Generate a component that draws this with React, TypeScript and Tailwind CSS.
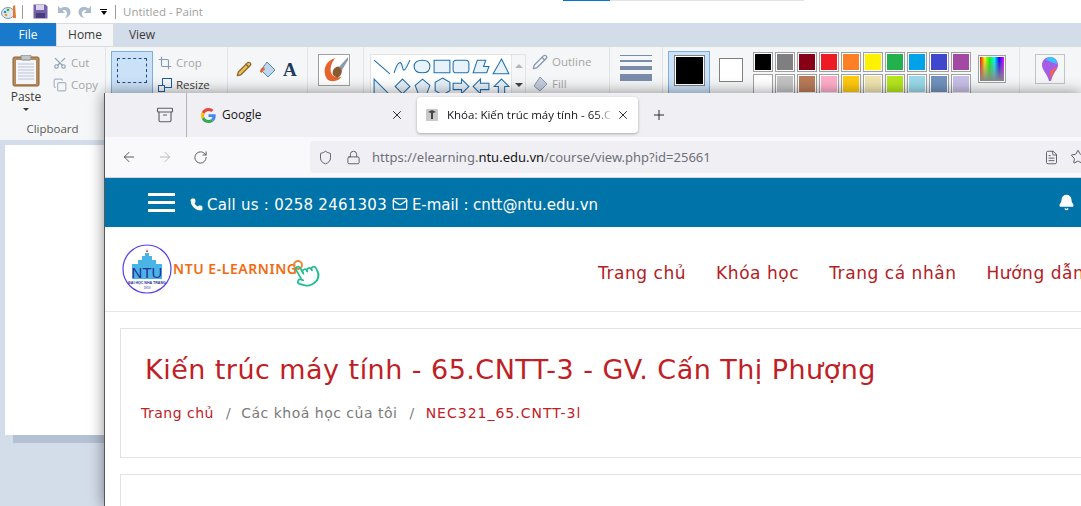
import { ArrowLeft, ArrowRight, Bell, Lock, Mail, Phone, Plus, RotateCw, Shield, Star, X, Pointer, Crop, Scissors, Copy, Pencil, FileText, Archive } from 'lucide-react';

const swatchesTop = ['#000000', '#7f7f7f', '#880015', '#ed1c24', '#ff7f27', '#fff200', '#22b14c', '#00a2e8', '#3f48cc', '#a349a4'];
const swatchesBottom = ['#ffffff', '#c3c3c3', '#b97a57', '#ffaec9', '#ffc90e', '#efe4b0', '#b5e61d', '#99d9ea', '#7092be', '#c8bfe7'];
const navItems = ['Trang chủ', 'Khóa học', 'Trang cá nhân', 'Hướng dẫn'];

const shapePaths = [
  'M2 3 L17 16',
  'M2 15 C6 2 9 4 10 10 C11 16 14 10 17 3',
  'M10 3 C4 3 2 6 2 9 C2 13 5 15 10 15 C15 15 17 12 17 9 C17 6 15 3 10 3 Z',
  'M2 3 H17 V15 H2 Z',
  'M5 3 H14 Q17 3 17 6 V12 Q17 15 14 15 H5 Q2 15 2 12 V6 Q2 3 5 3 Z',
  'M6 3 H14 L12 9 H17 L15 15 H2 Z',
  'M10 2 L17 16 H2 Z',
  'M2 2 L17 17 H2 Z',
  'M10 2 L17 9 L10 16 L3 9 Z',
  'M10 2 L17 8 L14 16 H6 L3 8 Z',
  'M10 1 L17 5 V13 L10 17 L3 13 V5 Z',
  'M2 6 H10 V2 L17 9 L10 16 V12 H2 Z',
  'M17 6 H9 V2 L2 9 L9 16 V12 H17 Z',
  'M10 2 L17 9 H13 V17 H7 V9 H3 Z',
];

function PaintTitleBar() {
  return (
    <div className="h-[23px] flex items-center bg-white text-[11.5px] text-[#a0a0a0]">
      <svg width="16" height="16" viewBox="0 0 16 16" className="ml-[1px]">
        <ellipse cx="7" cy="9" rx="6.5" ry="5.5" fill="#dfe8ef" stroke="#7a9ab5" />
        <circle cx="4" cy="8" r="1.3" fill="#2f8fd6" />
        <circle cx="7" cy="6" r="1.3" fill="#3aa655" />
        <circle cx="5" cy="11" r="1.3" fill="#e2a21b" />
        <path d="M12 2 L14 1 L15 14 L12 14 Z" fill="#e8762c" />
      </svg>
      <div className="w-px h-[14px] bg-[#9a9a9a] ml-[5px]" />
      <svg width="15" height="15" viewBox="0 0 15 15" className="ml-[10px]">
        <path d="M0.5 0.5 H12.5 L14.5 2.5 V14.5 H0.5 Z" fill="#7463a8" />
        <rect x="3" y="1" width="8" height="5" fill="#d9d4ea" />
        <rect x="3" y="9" width="9" height="5" fill="#4a3d7c" />
      </svg>
      <svg width="14" height="14" viewBox="0 0 14 14" className="ml-[9px]">
        <path d="M1 1 V8 H8 L5.5 5.5 C8 4 10.5 6 10 9 C9.8 10.5 9 12 8 13 C11 12.5 13.5 10 13.5 7 C13.5 2.5 8 0.5 3.5 3.5 Z" fill="#a9bbcd" />
      </svg>
      <svg width="14" height="14" viewBox="0 0 14 14" className="ml-[7px]">
        <path d="M13 1 V8 H6 L8.5 5.5 C6 4 3.5 6 4 9 C4.2 10.5 5 12 6 13 C3 12.5 0.5 10 0.5 7 C0.5 2.5 6 0.5 10.5 3.5 Z" fill="#a9bbcd" />
      </svg>
      <div className="ml-[8px] flex flex-col items-center gap-[1px]">
        <div className="w-[7px] h-px bg-black" />
        <div className="w-0 h-0 border-x-[3.5px] border-x-transparent border-t-[4px] border-t-black" />
      </div>
      <div className="w-px h-[14px] bg-[#9a9a9a] ml-[8px]" />
      <span className="ml-[7px]">Untitled - Paint</span>
    </div>
  );
}

function PaintTabs() {
  return (
    <div className="h-[23px] flex text-[12px] text-[#3b3b3b]">
      <div className="w-[56px] bg-[#1979ca] text-white flex items-center justify-center">File</div>
      <div className="w-[58px] bg-[#f5f6f7] border-x border-t border-[#dadbdc] flex items-center justify-center">Home</div>
      <div className="w-[56px] flex items-center justify-center">View</div>
    </div>
  );
}

function RibbonLabelled({ icon, label, dim }: { icon: React.ReactNode; label: string; dim?: boolean }) {
  return (
    <div className={`h-[22px] flex items-center gap-[4px] text-[11.5px] ${dim ? 'text-[#a6a6a6]' : 'text-[#3b3b3b]'}`}>
      {icon}
      <span>{label}</span>
    </div>
  );
}

function PaintRibbon() {
  return (
    <div className="h-[94px] flex bg-[#f5f6f7] border-t border-[#dadbdc] text-[12px] text-[#3b3b3b] overflow-hidden">
      {/* clipboard */}
      <div className="w-[106px] shrink-0 border-r border-[#e2e3e4] flex flex-col">
        <div className="flex h-[74px]">
          <div className="w-[52px] flex flex-col items-center pt-[8px]">
            <svg width="28" height="32" viewBox="0 0 28 32">
              <rect x="1" y="2" width="26" height="29" rx="1.5" fill="#b58a5e" stroke="#8c6239" />
              <rect x="4" y="5" width="20" height="24" fill="#f4f5f8" />
              <path d="M6 9 H22 M6 12 H22 M6 15 H22 M6 18 H22 M6 21 H22 M6 24 H22" stroke="#b8c4d6" />
              <rect x="9" y="0" width="10" height="5" rx="1" fill="#c5c5c5" stroke="#8a8a8a" />
            </svg>
            <span className="mt-[2px] leading-[16px]">Paste</span>
            <div className="mt-[3px] w-0 h-0 border-x-[3px] border-x-transparent border-t-[3px] border-t-[#3b3b3b]" />
          </div>
          <div className="pt-[5px] pl-[1px]">
            <RibbonLabelled dim icon={<Scissors size={14} className="text-[#8fa1b5] -rotate-90" />} label="Cut" />
            <RibbonLabelled dim icon={<Copy size={14} className="text-[#a9b6c6]" />} label="Copy" />
          </div>
        </div>
        <div className="text-center text-[11.5px] text-[#5b5b5b] leading-[16px]">Clipboard</div>
      </div>
      {/* image */}
      <div className="w-[122px] shrink-0 border-r border-[#e2e3e4] flex pt-[4px] pl-[5px] gap-[5px]">
        <div className="w-[42px] h-[70px] border border-[#7eaee0] bg-[#cbe1f7] flex flex-col items-center pt-[6px]">
          <div className="w-[30px] h-[25px] border border-dashed border-[#1f4e8c]" />
          <span className="mt-[10px]">Select</span>
        </div>
        <div className="pt-[1px]">
          <RibbonLabelled dim icon={<Crop size={14} className="text-[#8a98b8]" />} label="Crop" />
          <RibbonLabelled icon={
            <svg width="14" height="14" viewBox="0 0 14 14" fill="none" stroke="#1d5fa8">
              <rect x="4.5" y="0.5" width="9" height="9" />
              <rect x="0.5" y="7.5" width="6" height="6" fill="#f5f6f7" />
            </svg>
          } label="Resize" />
        </div>
      </div>
      {/* tools */}
      <div className="w-[80px] shrink-0 border-r border-[#e2e3e4] flex items-start gap-[7px] pl-[8px] pt-[14px]">
        <Pencil size={16} className="text-[#8a6a3a] fill-[#f1c14e]" />
        <svg width="17" height="17" viewBox="0 0 17 17">
          <path d="M8 1 L16 9 L9 16 L2 9 Z" fill="#bcd8ef" stroke="#5b86ad" />
          <path d="M1 11 C1 8 3 7 5 6 L6 9 C4 9 3 11 3 12 Z" fill="#e8622c" />
        </svg>
        <span className="font-['Liberation_Serif',serif] font-bold text-[19px] leading-[17px] text-[#1f3a60]">A</span>
      </div>
      {/* brushes */}
      <div className="w-[56px] shrink-0 border-r border-[#e2e3e4] pl-[10px] pt-[7px]">
        <div className="w-[32px] h-[32px] border border-[#a0a0a0] bg-white overflow-hidden">
          <svg width="30" height="30" viewBox="0 0 30 30">
            <path d="M16 3 C6 6 3 16 8 24 C12 28 20 26 22 22 C14 24 9 18 13 8 Z" fill="#e8622c" />
            <path d="M14 20 C12 14 18 10 21 12 C25 15 22 22 18 23 Z" fill="#8a5a32" />
            <path d="M20 12 L29 2 L29 5 L23 15 Z" fill="#8d99ae" />
          </svg>
        </div>
      </div>
      {/* shapes */}
      <div className="w-[246px] shrink-0 border-r border-[#e2e3e4] flex pl-[6px] pt-[7px]">
        <div className="w-[142px] h-[80px] border border-[#e2e3e4] bg-white grid grid-cols-7 auto-rows-[20px] content-start pt-[2px] pl-[1px]">
          {shapePaths.map((d) => (
            <svg key={d} width="20" height="20" viewBox="0 0 19 19" fill="#e8f2fa" stroke="#1f6fb0">
              <path d={d} fillOpacity={d === 'M2 3 L17 16' ? 0 : 1} />
            </svg>
          ))}
        </div>
        <div className="w-[14px] h-[80px] border-y border-r border-[#e2e3e4] flex flex-col items-center pt-[9px] gap-[15px]">
          <div className="w-0 h-0 border-x-[4px] border-x-transparent border-b-[4px] border-b-[#b5b5b5]" />
          <div className="w-0 h-0 border-x-[4px] border-x-transparent border-t-[4px] border-t-[#444]" />
        </div>
        <div className="pl-[6px] -mt-[3px]">
          <RibbonLabelled dim icon={<Pencil size={16} className="text-[#8a98b0]" />} label="Outline" />
          <RibbonLabelled dim icon={
            <svg width="16" height="16" viewBox="0 0 16 16">
              <path d="M8 1 L15 8 L8 15 L2 10 Z" fill="#c4cede" stroke="#8a98b0" />
            </svg>
          } label="Fill" />
        </div>
      </div>
      {/* size */}
      <div className="w-[53px] shrink-0 border-r border-[#e2e3e4] flex flex-col items-center pt-[8px]">
        <div className="w-[32px] flex flex-col gap-[4px]">
          <div className="h-px bg-[#7b8cab]" />
          <div className="h-[2px] bg-[#7b8cab]" />
          <div className="h-[4px] bg-[#7b8cab]" />
          <div className="h-[7px] bg-[#7b8cab]" />
        </div>
      </div>
      {/* colours */}
      <div className="w-[357px] shrink-0 border-r border-[#e2e3e4] flex pt-[4px] pl-[5px]">
        <div className="w-[42px] h-[70px] border border-[#7eaee0] bg-[#cbe1f7] pl-[5px] pt-[3px]">
          <div className="w-[31px] h-[31px] border border-[#808080] p-[1px] bg-white">
            <div className="w-full h-full bg-black" />
          </div>
        </div>
        <div className="ml-[9px] mt-[7px] w-[24px] h-[24px] border border-[#808080] bg-white" />
        <div className="ml-[10px] mt-[1px] flex flex-col gap-[2px]">
          {[swatchesTop, swatchesBottom].map((row) => (
            <div key={row[0]} className="flex gap-[2px]">
              {row.map((c) => (
                <div key={c} className="w-[20px] h-[20px] border border-[#a0a0a0] p-[1px] bg-white">
                  <div className="w-full h-full" style={{ backgroundColor: c }} />
                </div>
              ))}
            </div>
          ))}
        </div>
        <div className="ml-[7px] mt-[4px] w-[28px] h-[28px] border border-[#a0a0a0] p-px bg-white">
          <div className="w-full h-full bg-[linear-gradient(to_bottom,transparent,#8a8a8a),linear-gradient(to_right,#f00,#ff0,#0f0,#0ff,#00f,#f0f)]" />
        </div>
      </div>
      {/* paint 3d */}
      <div className="flex-1 pl-[15px] pt-[7px]">
        <div className="w-[30px] h-[30px] border border-[#c4c4c4] bg-[#f5f6f7] flex items-center justify-center">
          <svg width="16" height="25" viewBox="0 0 16 25">
            <path d="M8 0 C13 0 16 4 16 8 C16 13 11 15 9 24 L7 24 C6 18 0 13 0 8 C0 4 3 0 8 0 Z" fill="#a45ee5" />
            <path d="M8 0 C12 0 15 3 15 7 L4 3 C5 1 6 0 8 0 Z" fill="#32c5ff" />
            <path d="M9 24 C9 18 13 14 15 10 L8 14 Z" fill="#f7643d" />
          </svg>
        </div>
      </div>
    </div>
  );
}

function BrowserTabs() {
  return (
    <div className="h-[44px] shrink-0 flex items-center bg-[#f0f0f4] text-[12px] text-[#15141a]">
      <div className="w-[82px] h-full shrink-0 border-r border-[#b6b6ba] flex items-center justify-end pr-[12px]">
        <Archive size={18} strokeWidth={1.5} className="text-[#5b5b66]" />
      </div>
      <div className="w-[230px] shrink-0 flex items-center pl-[14px] pr-[13px]">
        <svg width="15" height="15" viewBox="0 0 48 48">
          <path fill="#EA4335" d="M24 9.5c3.5 0 6.7 1.3 9.1 3.5l6.8-6.8C35.8 2.4 30.2 0 24 0 14.6 0 6.5 5.4 2.6 13.2l7.9 6.2C12.4 13.7 17.7 9.5 24 9.5z" />
          <path fill="#4285F4" d="M47 24.5c0-1.6-.2-3.1-.4-4.5H24v9h12.9c-.6 3-2.2 5.5-4.7 7.2l7.7 6c4.4-4.1 7.1-10.2 7.1-17.7z" />
          <path fill="#FBBC05" d="M10.5 28.6c-.5-1.4-.8-3-.8-4.6s.3-3.2.8-4.6l-7.9-6.2C1 16.5 0 20.1 0 24s1 7.5 2.6 10.8z" />
          <path fill="#34A853" d="M24 48c6.2 0 11.8-2 15.8-5.8l-7.7-6c-2.1 1.4-4.8 2.3-8.1 2.3-6.3 0-11.6-4.2-13.5-9.9l-7.9 6.2C6.5 42.6 14.6 48 24 48z" />
        </svg>
        <span className="ml-[6px] flex-1">Google</span>
        <X size={14} strokeWidth={1.5} />
      </div>
      <div className="w-[221px] h-[36px] shrink-0 bg-white rounded-[4px] shadow-[0_1px_3px_rgba(0,0,0,0.3)] flex items-center pl-[9px] pr-[8px]">
        <svg width="12" height="12" viewBox="0 0 12 12" className="shrink-0">
          <rect width="12" height="12" rx="1" fill="#c9c9c9" />
          <path d="M2 3 L6 1 L10 3 L7 4 V10 H5 V4 Z" fill="#444" />
        </svg>
        <span className="ml-[9px] w-[166px] shrink-0 overflow-hidden whitespace-nowrap text-[11.5px] [mask-image:linear-gradient(to_right,black_90%,transparent)]">Khóa: Kiến trúc máy tính - 65.CNTT-3</span>
        <X size={14} strokeWidth={1.5} className="ml-auto shrink-0" />
      </div>
      <Plus size={16} strokeWidth={1.5} className="ml-[13px] text-[#2b2a33]" />
    </div>
  );
}

function BrowserToolbar() {
  return (
    <div className="h-[41px] shrink-0 flex items-center bg-[#f9f9fb] border-b border-[#d4d4d8]">
      <ArrowLeft size={16} strokeWidth={1.5} className="ml-[16px] shrink-0 text-[#5b5b66]" />
      <ArrowRight size={16} strokeWidth={1.5} className="ml-[20px] shrink-0 text-[#b9b9bf]" />
      <RotateCw size={15} strokeWidth={1.6} className="ml-[20px] shrink-0 text-[#5b5b66]" />
      <div className="ml-[102px] flex-1 h-[32px] bg-[#f0f0f4] rounded-l-[4px] flex items-center pl-[8px] text-[13px] text-[#6f6f78] whitespace-nowrap font-['Noto_Sans',sans-serif]">
        <Shield size={15} strokeWidth={1.5} className="shrink-0 text-[#5b5b66]" />
        <Lock size={15} strokeWidth={1.5} className="ml-[13px] shrink-0 text-[#5b5b66]" />
        <span className="ml-[11px] mt-[1px]">https://elearning.<span className="text-[#15141a]">ntu.edu.vn</span>/course/view.php?id=25661</span>
        <FileText size={15} strokeWidth={1.5} className="ml-auto shrink-0 text-[#5b5b66]" />
        <Star size={16} strokeWidth={1.5} className="ml-[11px] -mr-[5px] shrink-0 text-[#5b5b66]" />
      </div>
    </div>
  );
}

function SiteHeader() {
  return (
    <div className="h-[49px] shrink-0 flex items-center bg-[#0073a8] text-white text-[15px] whitespace-nowrap font-['DejaVu_Sans',sans-serif]">
      <div className="ml-[43px] w-[27px] shrink-0 flex flex-col gap-[5px]">
        <div className="h-[3px] bg-white" />
        <div className="h-[3px] bg-white" />
        <div className="h-[3px] bg-white" />
      </div>
      <Phone size={13} className="ml-[15px] shrink-0 fill-white mt-[3px]" />
      <span className="ml-[4px] mt-[6px] tracking-[0.25px]">Call us : 0258 2461303</span>
      <Mail size={16} className="ml-[5px] shrink-0 mt-[3px]" />
      <span className="ml-[4px] mt-[6px] tracking-[-0.05px]">E-mail : cntt@ntu.edu.vn</span>
      <Bell size={17} className="ml-auto mr-[6px] fill-white shrink-0" />
    </div>
  );
}

function NtuLogo() {
  return (
    <svg width="50" height="50" viewBox="0 0 50 50" className="ml-[17px] shrink-0">
      <circle cx="25" cy="25" r="24" fill="white" stroke="#5b3be8" strokeWidth="1.2" />
      <path d="M25 5 L26 8 L24 8 Z" fill="#d92b2b" />
      <path d="M10 20 H16 V16 H20 V12 H23 V9 H27 V12 H30 V16 H34 V20 H40 V35 H10 Z" fill="#4bb4e6" />
      <text x="25" y="34" textAnchor="middle" fontSize="15" fill="#27309b" fontFamily="Liberation Sans, sans-serif">NTU</text>
      <text x="25" y="40" textAnchor="middle" fontSize="3.6" fontWeight="700" fill="#27309b" fontFamily="Liberation Sans, sans-serif">ĐẠI HỌC NHA TRANG</text>
      <text x="25" y="45" textAnchor="middle" fontSize="3" fill="#27309b" fontFamily="Liberation Sans, sans-serif">1959</text>
    </svg>
  );
}

function SiteNav() {
  return (
    <div className="h-[85px] shrink-0 flex items-center border-b border-[#e6e6e6] whitespace-nowrap font-['DejaVu_Sans',sans-serif]">
      <NtuLogo />
      <span className="ml-[1px] w-[120px] shrink-0 text-[#f26b12] text-[14px] font-semibold relative -top-[1px] font-['Noto_Sans',sans-serif] tracking-[0.55px]">NTU E-LEARNING</span>
      <div className="relative w-[28px] h-[30px] shrink-0 top-[7px]">
        <div className="absolute left-[0px] top-[-1px] w-[10px] h-[10px] rounded-full border-2 border-[#e8893a]" />
        <Pointer size={27} strokeWidth={1.5} className="text-[#1fbf8f] -rotate-[30deg]" />
      </div>
      <div className="ml-[277px] mt-[10px] flex gap-[30px] text-[17px] tracking-[0.55px] text-[#b3201f]">
        {navItems.map((item) => <span key={item}>{item}</span>)}
      </div>
    </div>
  );
}

function BrowserWindow() {
  return (
    <div className="absolute left-[104px] top-[93px] w-[977px] h-[413px] overflow-hidden bg-white border-l border-[#55585c] shadow-[0_0_14px_rgba(0,0,0,0.45)] flex flex-col">
      <BrowserTabs />
      <BrowserToolbar />
      <SiteHeader />
      <SiteNav />
      <div className="pl-[15px] pt-[16px] font-['DejaVu_Sans',sans-serif] whitespace-nowrap">
        <div className="w-[1100px] h-[130px] border border-[#e3e3e3] pl-[20px] pt-[21px]">
          <h1 className="pl-[4px] text-[27px] leading-[40px] tracking-[0.46px] text-[#bf2025]">Kiến trúc máy tính - 65.CNTT-3 - GV. Cấn Thị Phượng</h1>
          <div className="mt-[11px] text-[14px] leading-[24px] tracking-[0.5px] flex text-[#7a7a7a]">
            <span className="text-[#bf2025]">Trang chủ</span>
            <span className="ml-[12px]">/</span>
            <span className="ml-[10px]">Các khoá học của tôi</span>
            <span className="ml-[12px]">/</span>
            <span className="ml-[11px] tracking-[1px] text-[#bf2025]">NEC321_65.CNTT-3l</span>
          </div>
        </div>
        <div className="mt-[16px] w-[1100px] h-[100px] border border-[#e3e3e3]" />
      </div>
    </div>
  );
}

export default function App() {
  return (
    <div className="relative w-[1081px] h-[506px] overflow-hidden bg-[#d3dce9] font-['Open_Sans','Noto_Sans',sans-serif]">
      <div className="absolute left-[563px] top-0 w-[47px] h-px bg-[#0078d7]" />
      <div className="absolute left-[610px] top-0 w-[194px] h-px bg-[#e3e3e3]" />
      <PaintTitleBar />
      <PaintTabs />
      <PaintRibbon />
      <div className="ml-[5px] mt-[5px] w-[110px] h-[290px] bg-white shadow-[8px_8px_0_rgba(150,165,190,0.5)]" />
      <BrowserWindow />
    </div>
  );
}
